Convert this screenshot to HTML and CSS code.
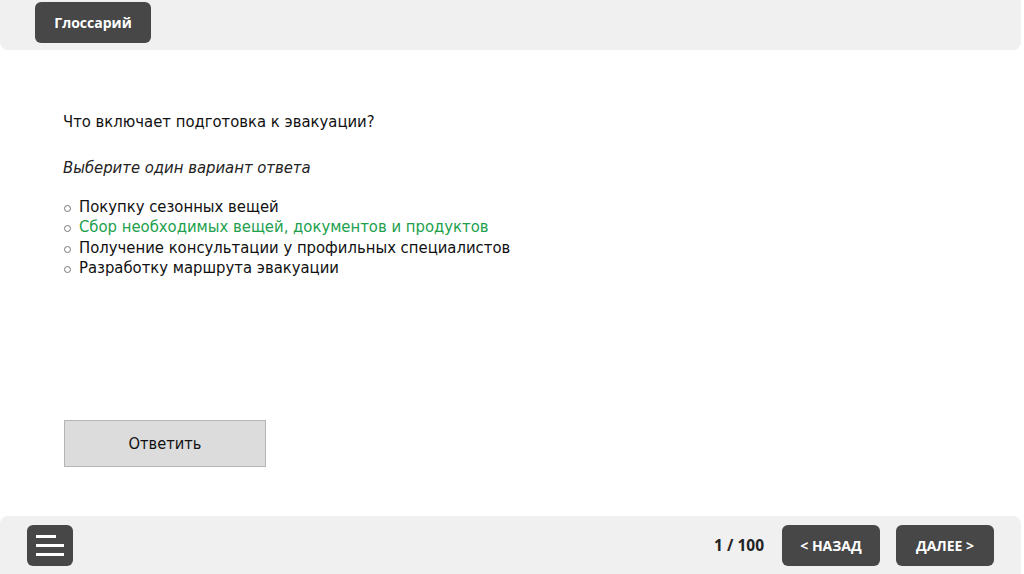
FILE: index.html
```html
<!DOCTYPE html>
<html lang="ru">
<head>
    <meta charset="UTF-8">
    <meta name="viewport" content="width=device-width, initial-scale=1.0">
    <title>Тест</title>
    <link rel="stylesheet" href="styles.css">
</head>
<body>
    <div class="page">
        <header class="top-bar">
            <button class="dark-button glossary-button">Глоссарий</button>
        </header>

        <main class="quiz">
            <div class="question">Что включает подготовка к эвакуации?</div>
            <div class="hint">Выберите один вариант ответа</div>
            <ul class="options">
                <li class="option"><span class="bullet"></span>Покупку сезонных вещей</li>
                <li class="option correct"><span class="bullet"></span>Сбор необходимых вещей, документов и продуктов</li>
                <li class="option"><span class="bullet"></span>Получение консультации у профильных специалистов</li>
                <li class="option"><span class="bullet"></span>Разработку маршрута эвакуации</li>
            </ul>
            <button class="answer-button">Ответить</button>
        </main>

        <footer class="bottom-bar">
            <button class="dark-button menu-button" aria-label="Меню">
                <span class="menu-line short"></span>
                <span class="menu-line"></span>
                <span class="menu-line"></span>
            </button>
            <div class="pager">
                <span class="counter">1 / 100</span>
                <button class="dark-button nav-button">&lt; НАЗАД</button>
                <button class="dark-button nav-button">ДАЛЕЕ &gt;</button>
            </div>
        </footer>
    </div>
</body>
</html>
```

FILE: styles.css
```css
body, html {
    margin: 0;
    padding: 0;
    width: 100%;
    height: 100%;
    background: #ffffff;
    font-family: "DejaVu Sans Condensed", "DejaVu Sans", sans-serif;
}

.page {
    display: flex;
    flex-direction: column;
    height: 574px;
    width: 1024px;
}

.top-bar {
    display: flex;
    align-items: flex-start;
    height: 50px;
    width: 1021px;
    padding: 2px 0 0 35px;
    box-sizing: border-box;
    background: #f0f0f0;
    border-radius: 0 0 8px 8px;
}

.dark-button {
    border: none;
    border-radius: 6px;
    background: #474747;
    color: #ffffff;
    font-family: "Open Sans", sans-serif;
    font-weight: bold;
    font-size: 14px;
    cursor: pointer;
    padding: 0;
}

.glossary-button {
    width: 116px;
    height: 41px;
}

.quiz {
    flex: 1;
    padding: 61px 0 0 63px;
}

.question {
    font-size: 16.5px;
    color: #111;
    line-height: 21px;
}

.hint {
    margin-top: 25px;
    font-size: 16.5px;
    font-style: italic;
    color: #222;
    line-height: 21px;
}

.options {
    list-style: none;
    margin: 18px 0 0 0;
    padding: 0;
}

.option {
    display: flex;
    align-items: center;
    height: 20.5px;
    font-size: 16.5px;
    color: #111;
}

.option.correct {
    color: #20a04c;
}

.bullet {
    width: 5px;
    height: 5px;
    margin: 4px 8px 0 1px;
    border: 1px solid #777;
    border-radius: 50%;
}

.answer-button {
    display: block;
    margin-top: 142px;
    margin-left: 1px;
    width: 202px;
    height: 47px;
    background: #dcdcdc;
    border: 1px solid #b4b4b4;
    font-family: "DejaVu Sans Condensed", "DejaVu Sans", sans-serif;
    font-size: 16.3px;
    color: #111;
    cursor: pointer;
}

.bottom-bar {
    display: flex;
    justify-content: space-between;
    align-items: center;
    height: 58px;
    width: 1021px;
    padding: 0 27px 0 27px;
    box-sizing: border-box;
    background: #f0f0f0;
    border-radius: 8px 8px 0 0;
}

.menu-button {
    display: flex;
    flex-direction: column;
    gap: 6px;
    padding: 10px 0 0 9px;
    width: 46px;
    height: 41px;
    box-sizing: border-box;
    align-items: flex-start;
}

.menu-line {
    display: block;
    width: 28px;
    height: 3px;
    background: #ffffff;
}

.menu-line.short {
    width: 20px;
}

.pager {
    display: flex;
    align-items: center;
}

.counter {
    font-family: "Open Sans", sans-serif;
    font-weight: bold;
    font-size: 15.5px;
    color: #222;
    margin-right: 2px;
}

.nav-button {
    width: 98px;
    height: 41px;
    margin-left: 16px;
}
```
